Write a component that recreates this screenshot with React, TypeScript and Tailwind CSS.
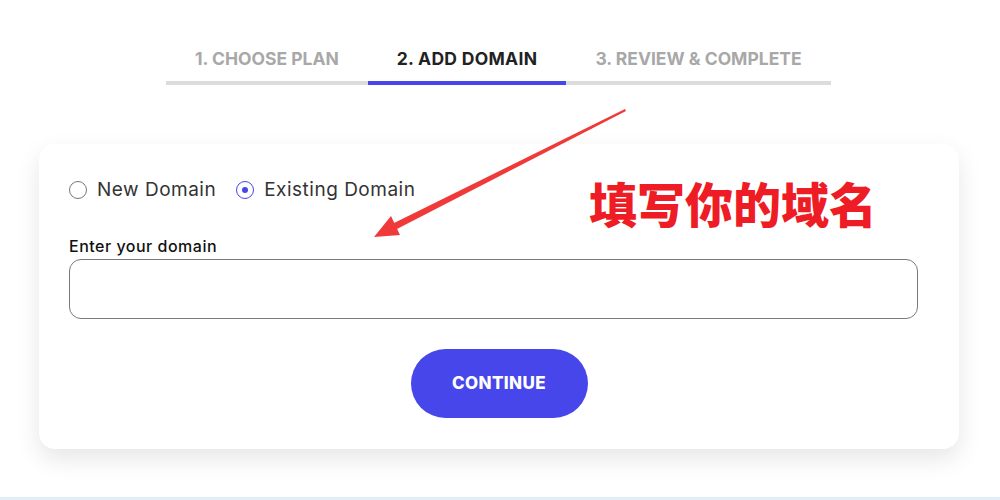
import React from "react";

const font = { fontFamily: "Inter, 'Noto Sans', sans-serif" };

function Radio({ checked }: { checked?: boolean }) {
  return (
    <span
      className={`flex h-[18px] w-[18px] items-center justify-center rounded-full border ${
        checked ? "border-[#4646ea]" : "border-[#777]"
      }`}
    >
      {checked && <span className="h-[6px] w-[6px] rounded-full bg-[#4646ea]" />}
    </span>
  );
}

export default function App() {
  return (
    <div className="relative h-[500px] w-[1000px] overflow-hidden bg-white" style={font}>
      <div className="flex pl-[166px] pt-[45px]">
        <div className="flex w-[202px] flex-col items-center">
          <span className="text-[17.5px] font-bold leading-[28px] text-[#a8a8a8]">1. CHOOSE PLAN</span>
          <span className="mt-[8px] h-[4px] w-full bg-[#dcdcdc]" />
        </div>
        <div className="flex w-[198px] flex-col items-center">
          <span className="text-[17.5px] font-bold leading-[28px] tracking-[0.3px] text-[#222]">2. ADD DOMAIN</span>
          <span className="mt-[8px] h-[4px] w-full bg-[#4646ea]" />
        </div>
        <div className="flex w-[265px] flex-col items-center">
          <span className="text-[17.5px] font-bold leading-[28px] text-[#a8a8a8]">3. REVIEW &amp; COMPLETE</span>
          <span className="mt-[8px] h-[4px] w-full bg-[#dcdcdc]" />
        </div>
      </div>

      <div className="relative ml-[39px] mt-[59px] w-[920px] rounded-[16px] bg-white pb-[31px] pl-[30px] pr-[41px] pt-[34px] shadow-[0_10px_24px_rgba(0,0,0,0.1)]">
        <div className="flex h-[24px] items-center text-[19px] tracking-[0.5px] text-[#333]">
          <Radio />
          <span className="ml-[10px]">New Domain</span>
          <span className="ml-[20px]"><Radio checked /></span>
          <span className="ml-[10px]">Existing Domain</span>
        </div>
        <div className="mt-[34px] text-[16px] font-medium leading-[20px] tracking-[0.5px] text-[#111]">Enter your domain</div>
        <div className="mt-[3px] h-[60px] w-full rounded-[12px] border border-[#7a7a7a]" />
        <div className="mt-[30px] flex justify-center pl-[11px]">
          <button className="h-[69px] w-[177px] rounded-full bg-[#4646ea] text-[17px] font-extrabold tracking-[0.4px] text-white">
            CONTINUE
          </button>
        </div>
        <div
          className="absolute left-[550px] top-[27px] text-[48px] font-black leading-[62px] text-[#ee1c25]"
          style={{ fontFamily: "'Noto Sans CJK SC', sans-serif" }}
        >
          填写你的域名
        </div>
      </div>

      <svg className="pointer-events-none absolute left-0 top-0" width="1000" height="500">
        <polygon points="625,109 626,111 395,230 392,224" fill="#f03a3a" />
        <polygon points="374,237 391,216 400,235" fill="#f03a3a" />
      </svg>

      <div className="absolute bottom-0 left-0 h-[3px] w-full bg-[#e3edf7]" />
    </div>
  );
}
